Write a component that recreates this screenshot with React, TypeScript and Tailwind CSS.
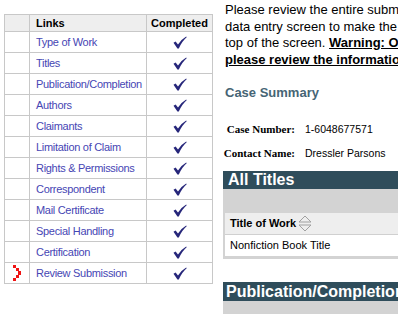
import React from 'react';

const links = [
    'Type of Work',
    'Titles',
    'Publication/Completion',
    'Authors',
    'Claimants',
    'Limitation of Claim',
    'Rights & Permissions',
    'Correspondent',
    'Mail Certificate',
    'Special Handling',
    'Certification',
    'Review Submission',
];

const Check: React.FC = () => (
    <svg width="14" height="13" viewBox="0 0 14 13">
        <path d="M0.5 6.8 L2.6 5.6 L5 8.6 Q8.2 3.2 13.2 0.4 L13.7 1.3 Q9.4 4.8 5.8 12.4 L4.4 12.4 Z" fill="#26267a" />
    </svg>
);

const Pointer: React.FC = () => (
    <svg width="9" height="16" viewBox="0 0 9 16" shapeRendering="crispEdges">
        <rect x="0" y="0" width="3" height="3" fill="#f01414" />
        <rect x="3" y="3" width="3" height="3" fill="#f01414" />
        <rect x="5" y="6" width="3" height="4" fill="#f01414" />
        <rect x="3" y="10" width="3" height="3" fill="#f01414" />
        <rect x="0" y="13" width="3" height="3" fill="#f01414" />
    </svg>
);

const SortIcon: React.FC = () => (
    <svg width="14" height="17" viewBox="0 0 14 17">
        <path d="M1 7 L7 1 L13 7 Z" fill="none" stroke="#a0a0a0" strokeWidth="1" />
        <path d="M1 10 L7 16 L13 10 Z" fill="none" stroke="#a0a0a0" strokeWidth="1" />
    </svg>
);

const sans = "font-['Liberation_Sans',Arial,sans-serif]";

export default function App() {
    return (
        <div className={`w-[398px] h-[314px] overflow-hidden bg-white flex ${sans}`}>
            {/* navigation table */}
            <div className="w-[223px] shrink-0 pl-[4px] pt-[14px]">
                <div className="border-l border-t border-[#c8c8c8] w-[209px]">
                    <div className="grid grid-cols-[25px_117px_66px] h-[17px] bg-[#eeeeee] text-[11px] font-bold text-black">
                        <div className="border-r border-b border-[#c8c8c8]" />
                        <div className="border-r border-b border-[#c8c8c8] pl-[6px] leading-[16px]">Links</div>
                        <div className="border-r border-b border-[#c8c8c8] text-center leading-[16px]">Completed</div>
                    </div>
                    {links.map((name, i) => (
                        <div key={name} className="grid grid-cols-[25px_117px_66px] h-[21px]">
                            <div className="border-r border-b border-[#c8c8c8] flex items-center justify-center">
                                {i === links.length - 1 && <Pointer />}
                            </div>
                            <div className="border-r border-b border-[#c8c8c8] pl-[6px] text-[11px] tracking-[-0.3px] leading-[20px] text-[#4646b4] whitespace-nowrap">
                                {name}
                            </div>
                            <div className="border-r border-b border-[#c8c8c8] flex items-center justify-center">
                                <Check />
                            </div>
                        </div>
                    ))}
                </div>
            </div>

            {/* review content */}
            <div className="w-[600px] shrink-0">
                <div className="pl-[2px] pt-[2px] text-[13px] leading-[16.5px] text-black whitespace-nowrap">
                    <div>Please review the entire submission below. If you need to make a correction, click the link for the</div>
                    <div>data entry screen to make the change, or use the navigation buttons at the</div>
                    <div>
                        top of the screen. <span className="font-bold underline">Warning: Once you submit, you cannot make changes,</span>
                    </div>
                    <div className="font-bold underline">please review the information carefully.</div>
                </div>

                <div className="pl-[2px] mt-[15px] text-[13px] font-bold text-[#466575]">Case Summary</div>

                <div className="mt-[19px] text-[10.5px]">
                    <div className="flex items-center h-[16px]">
                        <div className="w-[72px] text-right font-['Liberation_Serif',serif] font-bold text-[11px]">Case Number:</div>
                        <div className="pl-[10px]">1-6048677571</div>
                    </div>
                    <div className="flex items-center h-[16px] mt-[8px]">
                        <div className="w-[72px] text-right font-['Liberation_Serif',serif] font-bold text-[11px]">Contact Name:</div>
                        <div className="pl-[10px]">Dressler Parsons</div>
                    </div>
                </div>

                <div className="mt-[9px] h-[18px] bg-[#2f4d5b] text-white font-bold text-[16px] leading-[18px] pl-[5px]">All Titles</div>
                <div className="bg-[#d3d3d3] pt-[24px] pl-[2px] pb-[3px]">
                    <div className="bg-white">
                        <div className="h-[22px] bg-[#eeeeee] border-b border-[#d0d0d0] flex items-center pl-[5px] text-[11px] font-bold text-black">
                            Title of Work
                            <span className="ml-[2px]"><SortIcon /></span>
                        </div>
                        <div className="h-[21px] flex items-center pl-[5px] text-[11px] text-black">Nonfiction Book Title</div>
                    </div>
                </div>

                <div className="mt-[23px] h-[19px] bg-[#2f4d5b] text-white font-bold text-[16px] leading-[19px] pl-[3px]">Publication/Completion</div>
                <div className="bg-[#d3d3d3] h-[40px]" />
            </div>
        </div>
    );
}
